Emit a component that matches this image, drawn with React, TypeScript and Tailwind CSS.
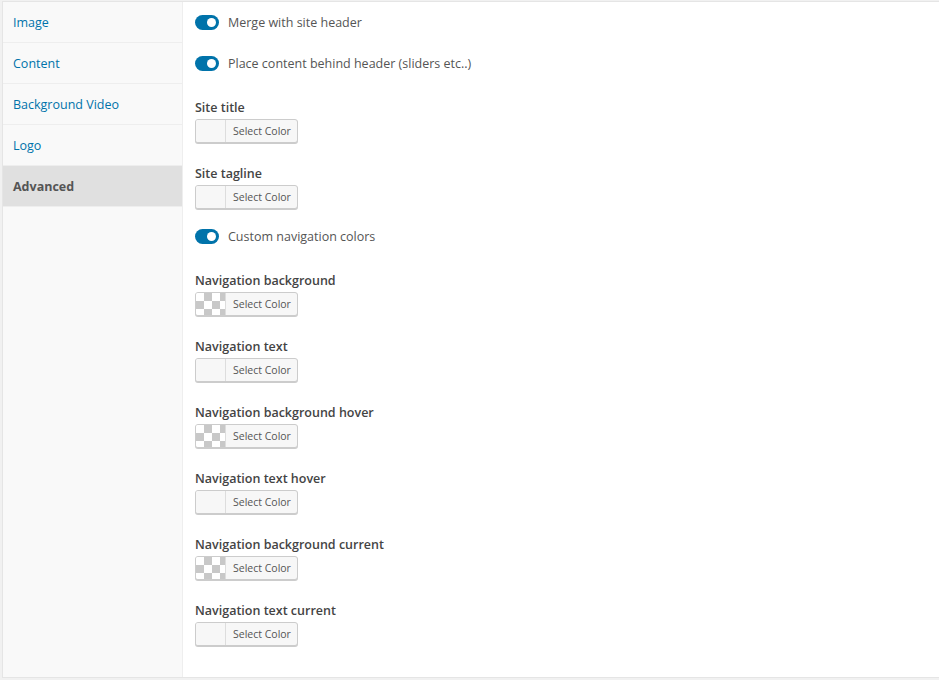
import React from "react";

const tabs = ["Image", "Content", "Background Video", "Logo", "Advanced"];

const Toggle = ({ label }: { label: string }) => (
  <div className="flex h-5 items-center">
    <span className="flex h-[15px] w-6 items-center justify-end rounded-full bg-[#0073aa] pr-[3px]">
      <span className="h-[9px] w-[9px] rounded-full bg-white" />
    </span>
    <span className="ml-[9px] mt-[2px] text-[12.5px] leading-5 text-[#555]">{label}</span>
  </div>
);

const ColorField = ({ label, alpha }: { label: string; alpha?: boolean }) => (
  <div className="mb-5">
    <div className="h-5 text-[12.5px] font-semibold leading-[22px] text-[#444]">{label}</div>
    <button className="mt-[2px] flex h-6 w-[103px] overflow-hidden rounded-[3px] border border-[#ccc] bg-[#f7f7f7] shadow-[0_1px_0_#ccc]">
      {alpha ? (
        <span className="h-full w-[30px] border-r border-[#ddd] bg-[conic-gradient(#c8c8c8_25%,#fff_0_50%,#c8c8c8_0_75%,#fff_0)] bg-[length:16px_16px]" />
      ) : (
        <span className="h-full w-[30px] border-r border-[#ddd] bg-[#f7f7f7]" />
      )}
      <span className="flex h-full items-center pl-[7px] pt-px text-[10.5px] text-[#555]">Select Color</span>
    </button>
  </div>
);

export default function App() {
  return (
    <div className="h-[680px] w-[939px] overflow-hidden bg-[#f1f1f1] pl-[2px] pt-px font-['Open_Sans',sans-serif]">
      <div className="flex h-[677px] border border-r-0 border-[#e5e5e5] bg-white">
        <div className="w-[180px] shrink-0 border-r border-[#eee] bg-[#f9f9f9]">
          {tabs.map((t) => (
            <div
              key={t}
              className={
                t === "Advanced"
                  ? "flex h-[41px] items-center border-b border-[#eee] bg-[#e0e0e0] pl-[10px] pt-[2px] text-[12.5px] font-bold text-[#555]"
                  : "flex h-[41px] items-center border-b border-[#eee] pl-[10px] pt-[2px] text-[12.5px] text-[#0073aa]"
              }
            >
              {t}
            </div>
          ))}
        </div>
        <div className="flex flex-col pl-3 pt-[10px]">
          <div className="mb-[21px]">
            <Toggle label="Merge with site header" />
          </div>
          <div className="mb-6">
            <Toggle label="Place content behind header (sliders etc..)" />
          </div>
          <ColorField label="Site title" />
          <ColorField label="Site tagline" />
          <div className="-mt-[3px] mb-6">
            <Toggle label="Custom navigation colors" />
          </div>
          <ColorField label="Navigation background" alpha />
          <ColorField label="Navigation text" />
          <ColorField label="Navigation background hover" alpha />
          <ColorField label="Navigation text hover" />
          <ColorField label="Navigation background current" alpha />
          <ColorField label="Navigation text current" />
        </div>
      </div>
    </div>
  );
}
